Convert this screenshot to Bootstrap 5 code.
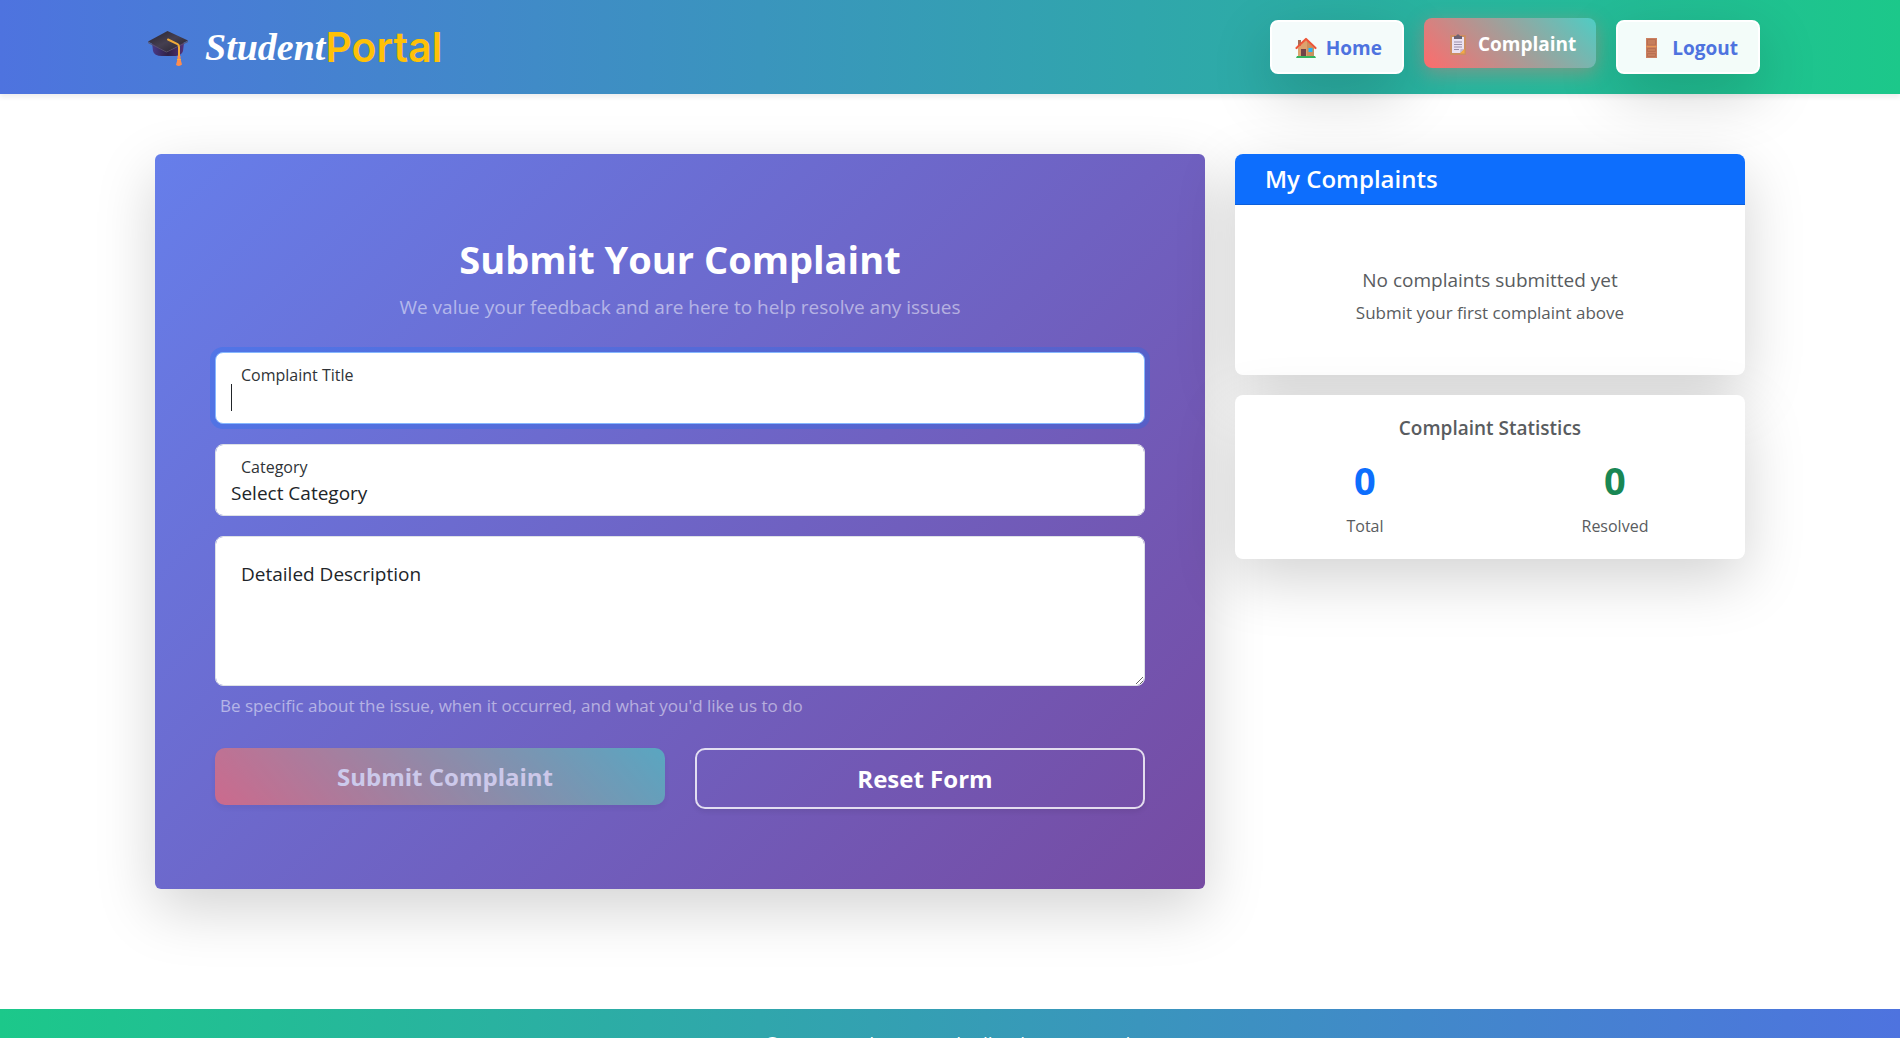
<!DOCTYPE html>
<html lang="en">
<head>
<meta charset="utf-8">
<meta name="viewport" content="width=device-width, initial-scale=1">
<title>Student Portal - Complaint</title>
<link href="https://cdn.jsdelivr.net/npm/bootstrap@5.3.0/dist/css/bootstrap.min.css" rel="stylesheet">
<style>
  :root { font-size: 20px; }
  body { font-family: "Open Sans", "Noto Sans", sans-serif; font-size: 19px; line-height: 30px; background: #fff; }
  .portal-container { max-width: 1650px; }
  .shadow-lg { box-shadow: 0 20px 60px rgba(0, 0, 0, .175) !important; }

  .site-header { background: linear-gradient(90deg, #4e73df, #1cc88a); padding: 20px 0; }
  .site-header.shadow-sm { box-shadow: 0 3px 5px rgba(0, 0, 0, .075) !important; }
  .brand-link { padding-left: 8px; line-height: 54px; }
  .brand-cap { width: 40px; height: 36px; margin: 4px 17px 0 0; }
  .brand-first { font: italic 700 38px/54px "Liberation Serif", serif; color: #fff; }
  .brand-second { font: 600 41px/54px "Inter", sans-serif; color: #ffc107; }

  .nav-pill { font-size: 19px; font-weight: 700; line-height: 30px; padding: 11px 20px 9px; border-radius: 8px; color: #4e73df;
    background: rgba(255, 255, 255, .95); border: 2px solid #fff; }
  .nav-pill svg { width: 28px; height: 22px; margin-right: 6px; }
  .nav-pill.current { color: #fff; border: 0; background: linear-gradient(45deg, #ff6b6b, #4ecdc4);
    box-shadow: 0 5px 19px rgba(255, 107, 107, .4); transform: translateY(-2px); }

  .main-area { padding: 60px 15px 120px; }
  .form-panel { background: linear-gradient(135deg, #667eea, #764ba2); border-radius: 6px; padding: 80px 60px; }
  .form-panel h2 { font-size: 38px; line-height: 50px; font-weight: 700; padding-bottom: 8px; }
  .soft-text { color: rgba(255, 255, 255, .5); }
  .small-text { font-size: 17px; line-height: 25px; }
  .field-hint { padding: 7px 5px 0; }

  .portal-field > .form-control { font-size: 19px; border-radius: 8px; color: #212529; height: 72px; padding: 33px 15px 7px; }
  .portal-field > select.form-control { padding-top: 35px !important; padding-bottom: 7px !important; }
  .portal-field > .form-control.is-active { border-color: #86b7fe; box-shadow: 0 0 0 5px rgba(13, 110, 253, .25);
    background: linear-gradient(#212529, #212529) 15px 31px / 1px 27px no-repeat #fff; }
  .portal-field > textarea.form-control { height: 150px; }
  .portal-field > label { font-size: 16px; line-height: 24px; height: auto; padding: 10px 25px; transform: none !important;
    color: #2f3337 !important; opacity: 1 !important; }
  .portal-field > label.resting { font-size: 19px; line-height: 30px; padding-top: 22px; color: #212529 !important; }
  .portal-field > label::after { display: none; }

  .btn-form { font-size: 24px; font-weight: 700; line-height: 37px; padding: 10px 20px 10px 30px; border-radius: 10px; }
  .btn-send { border: 0; background: linear-gradient(45deg, #ff6b6b, #4ecdc4); color: #fff; }
  .btn-send:disabled { opacity: .65; color: #fff; }
  .btn-clear { border: 2px solid rgba(255, 255, 255, .8); color: #fff; background: transparent; }
  .btn-form.shadow-sm { box-shadow: 0 3px 5px rgba(0, 0, 0, .075) !important; }

  .side-card { border: 0; border-radius: 8px; color: #595c60; }
  .side-card .card-header { padding: 10px 30px; border-radius: 8px 8px 0 0; border-bottom: 1px solid #0c5fda; background: #0d6efd; }
  .side-card h5 { font-size: 24px; line-height: 30px; font-weight: 600; }
  .side-card h6 { font-size: 19px; line-height: 26px; font-weight: 600; margin-bottom: 15px; }
  .empty-list { padding: 60px 20px 50px; }
  .stat-number { font-size: 38px; line-height: 48px; font-weight: 700; margin-bottom: 9px; }
  .stat-label { font-size: 16px; line-height: 26px; }
  .site-footer { background: linear-gradient(90deg, #1cc88a, #4e73df); padding: 20px 0; }
</style>
<script src="https://cdn.jsdelivr.net/npm/bootstrap@5.3.0/dist/js/bootstrap.bundle.min.js"></script>
</head>
<body>
<header class="site-header shadow-sm">
  <div class="container portal-container d-flex flex-wrap justify-content-between align-items-start">
    <a href="#" class="brand-link d-flex align-items-center text-decoration-none">
      <svg class="brand-cap" viewBox="0 0 40 36" aria-hidden="true">
        <defs>
          <linearGradient id="capTop" x1="0" y1="0" x2="1" y2="1"><stop offset="0" stop-color="#26222f"/><stop offset=".5" stop-color="#453f50"/><stop offset="1" stop-color="#24202b"/></linearGradient>
          <linearGradient id="capBase" x1="0" y1="0" x2="1" y2="0"><stop offset="0" stop-color="#4a3a88"/><stop offset=".5" stop-color="#2f2145"/><stop offset="1" stop-color="#54337c"/></linearGradient>
        </defs>
        <path d="M4 12 L5 20 Q6 25 14 25 L28 25 Q34 24 35 20 L36 12 Z" fill="url(#capBase)"/>
        <path d="M0 11 L18.500 20.500 L40 10 L40 11 L18.500 21.500 L0 12 Z" fill="#5c5569"/>
        <path d="M0 10.500 L19.500 0 L40 9.500 L18.500 20.500 Z" fill="url(#capTop)"/>
        <path d="M20 8.500 L29.500 13 Q31 14 31 16 L31 26" fill="none" stroke="#f0ab39" stroke-width="2" stroke-linecap="round"/>
        <path d="M29.500 25 h3 v3 l1.500 5.500 q-2.500 2.500 -6 .5 l1.500 -6 Z" fill="#ff8d4e"/>
        <path d="M29 28.500 h4" stroke="#f5b03a" stroke-width="1"/>
      </svg>
      <span class="brand-first">Student</span><span class="brand-second">Portal</span>
    </a>
    <nav aria-label="Main">
      <ul class="list-unstyled d-flex flex-wrap gap-3 mb-0 align-items-start">
        <li><a href="#" class="nav-pill shadow-lg d-flex align-items-center text-decoration-none">
          <svg viewBox="0 0 28 22" aria-hidden="true">
            <path d="M6 3 h3 v6 h-3 Z" fill="#a86b55"/>
            <path d="M6 11 L14 3 L22 11 V19.500 H6 Z" fill="#dda26d"/>
            <path d="M15 4 L22 11 V19.500 H15 Z" fill="#c9915f"/>
            <path d="M9 12 h5 v8 h-5 Z" fill="#704349"/>
            <path d="M16.500 11 h4 v4 h-4 Z" fill="#27b5f5"/>
            <path d="M4.500 11 L14 2 L23.500 11" fill="none" stroke="#ed5638" stroke-width="2.200" stroke-linecap="round" stroke-linejoin="round"/>
            <path d="M5 19 h18 l1 2 h-20 Z" fill="#35b45d"/>
          </svg>Home</a></li>
        <li><a href="#" aria-current="page" class="nav-pill current d-flex align-items-center text-decoration-none">
          <svg viewBox="0 0 28 22" aria-hidden="true">
            <rect x="6" y="2" width="16" height="20" rx="1" fill="#cd8d62"/>
            <path d="M8 4 h12 v12 l-4 4 h-8 Z" fill="#ebe2f2"/>
            <path d="M16 20 l.5 -4 h3.500 Z" fill="#c5b7d0"/><path d="M16 20.500 l4.500 -4.500 v4.500 Z" fill="#f4aa43"/>
            <path d="M10 9 h8 M10 11.500 h8 M10 14 h8 M10 16.500 h5" stroke="#9a8fa8" stroke-width="1"/>
            <path d="M10 6 v-3 h2 q2 -3.500 4 0 h2 v3 Z" fill="#6c6272"/>
          </svg>Complaint</a></li>
        <li><a href="#" class="nav-pill shadow-lg d-flex align-items-center text-decoration-none">
          <svg viewBox="0 0 28 22" aria-hidden="true">
            <rect x="8" y="1" width="11" height="20" fill="#cb8060"/>
            <path d="M9.500 2.500 h8 v5.500 h-8 Z M9.500 11.500 h8 v3 h-8 Z M9.500 16.500 h8 v3 h-8 Z" fill="#c67e5c" stroke="#b56c4e" stroke-width=".8"/>
            <path d="M8.500 9.500 h10" stroke="#e99855" stroke-width="1.200"/>
          </svg>Logout</a></li>
      </ul>
    </nav>
  </div>
</header>

<main class="container portal-container">
  <div class="main-area">
    <div class="row">
      <div class="col-lg-8">
        <section class="form-panel shadow-lg">
          <div class="text-center">
            <h2 class="text-white mb-0">Submit Your Complaint</h2>
            <p class="soft-text mb-4">We value your feedback and are here to help resolve any issues</p>
          </div>
          <form>
            <div class="form-floating portal-field mb-3">
              <input type="text" class="form-control is-active" id="title" placeholder="Complaint Title">
              <label for="title">Complaint Title</label>
            </div>
            <div class="form-floating portal-field mb-3">
              <select class="form-control" id="category"><option>Select Category</option></select>
              <label for="category">Category</label>
            </div>
            <div class="form-floating portal-field">
              <textarea class="form-control" id="details" placeholder="Detailed Description"></textarea>
              <label class="resting" for="details">Detailed Description</label>
            </div>
            <p class="soft-text small-text field-hint mb-4">Be specific about the issue, when it occurred, and what you'd like us to do</p>
            <div class="row align-items-start">
              <div class="col-md-6"><button type="submit" disabled class="btn btn-form btn-send shadow-sm w-100">Submit Complaint</button></div>
              <div class="col-md-6"><button type="reset" class="btn btn-form btn-clear shadow-sm w-100">Reset Form</button></div>
            </div>
          </form>
        </section>
      </div>
      <div class="col-lg-4">
        <section class="card side-card shadow-lg mb-3">
          <div class="card-header text-white"><h5 class="mb-0">My Complaints</h5></div>
          <div class="empty-list text-center">
            <p class="mb-0">No complaints submitted yet</p>
            <p class="small-text mb-0 pt-1">Submit your first complaint above</p>
          </div>
        </section>
        <section class="card side-card shadow-lg">
          <div class="card-body text-center">
            <h6>Complaint Statistics</h6>
            <div class="row">
              <div class="col-6"><div class="stat-number text-primary">0</div><div class="stat-label">Total</div></div>
              <div class="col-6"><div class="stat-number text-success">0</div><div class="stat-label">Resolved</div></div>
            </div>
          </div>
        </section>
      </div>
    </div>
  </div>
</main>

<footer class="site-footer text-white text-center">
  <div class="container portal-container">© 2024 Student Portal. All rights reserved.</div>
</footer>
</body>
</html>
